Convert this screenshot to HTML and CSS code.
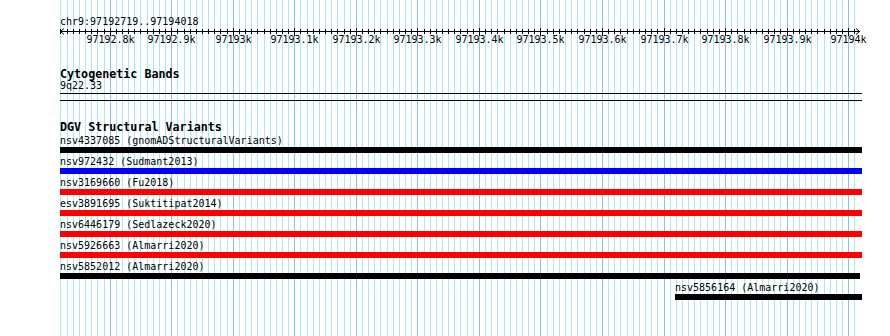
FILE: index.html
```html
<!doctype html>
<html lang="en">
<head>
  <meta charset="utf-8">
  <title>chr9:97192719..97194018</title>
  <link rel="stylesheet" href="styles.css">
</head>
<body>

<div class="browser">
  <svg class="grid" id="grid" width="890" height="336"></svg>

  <div class="tracks">
    <div class="locus">chr9:97192719..97194018</div>
    <svg class="scale" id="scale" width="802" height="20"></svg>

    <div class="track">
      <div class="track-label">Cytogenetic Bands</div>
      <div class="band-name">9q22.33</div>
      <div class="band"></div>
    </div>

    <div class="track">
      <div class="track-label">DGV Structural Variants</div>
      <div class="features" id="features"></div>
    </div>
  </div>
</div>

<script>
  const view = { start: 97192719, end: 97194018, width: 800 }
  const scale = view.width / (view.end - view.start + 1)
  const svgNS = 'http://www.w3.org/2000/svg'

  const variants = [
    { name: 'nsv4337085', study: 'gnomADStructuralVariants', start: 97181200, end: 97199800, type: 'both' },
    { name: 'nsv972432', study: 'Sudmant2013', start: 97150321, end: 97240118, type: 'gain' },
    { name: 'nsv3169660', study: 'Fu2018', start: 97190877, end: 97196540, type: 'loss' },
    { name: 'esv3891695', study: 'Suktitipat2014', start: 97172004, end: 97211655, type: 'loss' },
    { name: 'nsv6446179', study: 'Sedlazeck2020', start: 97189312, end: 97197073, type: 'loss' },
    { name: 'nsv5926663', study: 'Almarri2020', start: 97191450, end: 97195902, type: 'loss' },
    { name: 'nsv5852012', study: 'Almarri2020', start: 97192601, end: 97194018, type: 'both' },
    { name: 'nsv5856164', study: 'Almarri2020', start: 97193718, end: 97194520, type: 'both' }
  ]

  function toX(bp) {
    return (bp - view.start + 0.5) * scale
  }

  function clamp(x) {
    return Math.max(0, Math.min(802, x))
  }

  function el(name, attrs) {
    const node = document.createElementNS(svgNS, name)
    for (const key in attrs) node.setAttribute(key, attrs[key])
    return node
  }

  function drawGrid() {
    const grid = document.getElementById('grid')
    for (let bp = 97192720; bp <= view.end; bp += 10) {
      const x = 60 + Math.floor(toX(bp)) + 0.5
      grid.appendChild(el('line', {
        x1: x, x2: x, y1: 0, y2: 336,
        class: bp % 100 === 0 ? 'major' : 'minor'
      }))
    }
  }

  function drawScale() {
    const svg = document.getElementById('scale')
    svg.appendChild(el('line', { x1: 0, x2: 800, y1: 3.5, y2: 3.5, class: 'axis' }))
    svg.appendChild(el('polyline', { points: '4,0.5 0.5,3.5 4,6.5', class: 'axis' }))
    svg.appendChild(el('polyline', { points: '796,0.5 799.5,3.5 796,6.5', class: 'axis' }))

    for (let bp = 97192720; bp <= view.end; bp += 10) {
      const x = Math.floor(toX(bp)) + 0.5
      const major = bp % 100 === 0
      svg.appendChild(el('line', {
        x1: x, x2: x, y1: major ? 0 : 1, y2: major ? 8 : 6, class: 'axis'
      }))
      if (major) {
        const label = el('text', { x: x, y: 15, class: 'tick-label' })
        label.textContent = (bp / 1000) + 'k'
        svg.appendChild(label)
      }
    }
  }

  function drawFeatures() {
    const box = document.getElementById('features')
    variants.forEach(v => {
      const left = clamp(Math.round(toX(v.start)))
      const right = clamp(Math.round(toX(v.end + 1)))
      const row = document.createElement('div')
      row.className = 'feature'
      row.style.marginLeft = left + 'px'
      row.style.width = (right - left) + 'px'
      row.innerHTML = `
        <div class="feature-label">${v.name} (${v.study})</div>
        <div class="feature-bar ${v.type}"></div>
      `
      box.appendChild(row)
    })
  }

  drawGrid()
  drawScale()
  drawFeatures()
</script>

</body>
</html>
```

FILE: styles.css
```css
body {
  margin: 0;
  font-family: "DejaVu Sans Mono", monospace;
  font-size: 10px;
  color: #000;
  background: #fff;
}
.browser {
  position: relative;
  width: 890px;
  height: 336px;
  overflow: hidden;
}
.grid {
  position: absolute;
  top: 0;
  left: 0;
}
.grid line {
  stroke-width: 1;
}
.grid .minor {
  stroke: #a8eaf0;
}
.grid .major {
  stroke: #86c4ee;
}
.tracks {
  position: relative;
  width: 802px;
  padding: 16px 0 0 60px;
}
.locus {
  line-height: 12px;
}
.scale {
  display: block;
  overflow: visible;
}
.scale .axis {
  stroke: #000;
  stroke-width: 1;
  fill: none;
}
.tick-label {
  font-family: "DejaVu Sans Mono", monospace;
  font-size: 10px;
  fill: #000;
  text-anchor: middle;
}
.track {
  margin-top: 20px;
}
.track-label {
  font-weight: bold;
  font-size: 11.7px;
  line-height: 12px;
}
.band-name {
  line-height: 12px;
}
.band {
  height: 6px;
  margin-top: 1px;
  border-top: 1px solid #000;
  border-bottom: 1px solid #000;
}
.features {
  display: flex;
  flex-direction: column;
  gap: 3px;
  margin-top: 2px;
}
.feature {
  display: flex;
  flex-direction: column;
}
.feature-label {
  line-height: 12px;
  white-space: nowrap;
}
.feature-bar {
  height: 6px;
}
.feature-bar.both {
  background: #000;
}
.feature-bar.gain {
  background: #0000ff;
}
.feature-bar.loss {
  background: #ff0000;
}
```
